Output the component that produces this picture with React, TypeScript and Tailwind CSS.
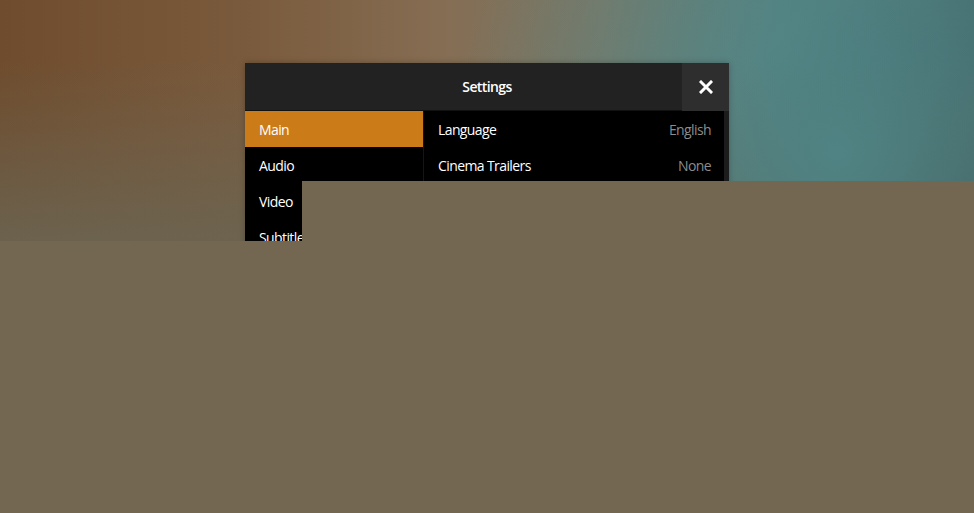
const tabs = ["Main", "Audio", "Video", "Subtitles", "Library", "Network"];

const rows = [
  { label: "Language", value: "English" },
  { label: "Cinema Trailers", value: "None" },
  { label: "Home Screen", value: "Default" },
  { label: "Theme Music", value: "On" },
];

export default function App() {
  return (
    <div className="relative h-[513px] w-full overflow-hidden bg-[radial-gradient(ellipse_40%_75%_at_86%_30%,rgba(80,135,136,0.9)_0%,rgba(80,135,136,0)_100%),radial-gradient(ellipse_30%_50%_at_100%_45%,rgba(45,65,70,0.7)_0%,rgba(45,65,70,0)_100%),linear-gradient(180deg,rgba(107,100,81,0)_0px,rgba(107,100,81,0)_60px,rgba(107,100,81,0.9)_240px),linear-gradient(90deg,#6f4c2d_0%,#7a5a3c_25%,#856d53_45%,#7b7866_62%,#56817f_80%,#46686a_100%)] font-['Open_Sans',sans-serif] tracking-[-0.6px]">
      <div className="mx-auto mt-[63px] w-[484px] shadow-[0_0_6px_rgba(0,0,0,0.25)]">
        <div className="relative flex h-[48px] items-center justify-center border-b border-[#111] bg-[#222]">
          <span className="text-[14px] font-semibold text-white">Settings</span>
          <button className="absolute right-0 top-0 flex h-[48px] w-[47px] items-center justify-center bg-[#2e2e2e]">
            <svg width="14" height="14" viewBox="0 0 14 14">
              <path d="M2 2 L12 12 M12 2 L2 12" stroke="white" strokeWidth="3" strokeLinecap="square" />
            </svg>
          </button>
        </div>
        <div className="flex h-[300px] bg-black">
          <div className="w-[179px] border-r border-[#151515]">
            {tabs.map((t, i) => (
              <div
                key={t}
                className={`flex h-[36px] items-center px-[14px] text-[14px] text-white ${i === 0 ? "bg-[#cc7b19]" : ""}`}
              >
                {t}
              </div>
            ))}
          </div>
          <div className="flex flex-1">
            <div className="flex-1">
              {rows.map((r) => (
                <div key={r.label} className="flex h-[36px] items-center justify-between pl-[14px] pr-[13px] text-[14px]">
                  <span className="text-white">{r.label}</span>
                  <span className="text-[#8c8c8c]">{r.value}</span>
                </div>
              ))}
            </div>
            <div className="w-[5px] bg-[#1c1c1c]" />
          </div>
        </div>
      </div>
      <div className="absolute left-[302px] right-0 top-[181px] h-[60px] bg-[#736752]" />
      <div className="absolute bottom-0 left-0 right-0 top-[241px] bg-[#736752]" />
    </div>
  );
}
